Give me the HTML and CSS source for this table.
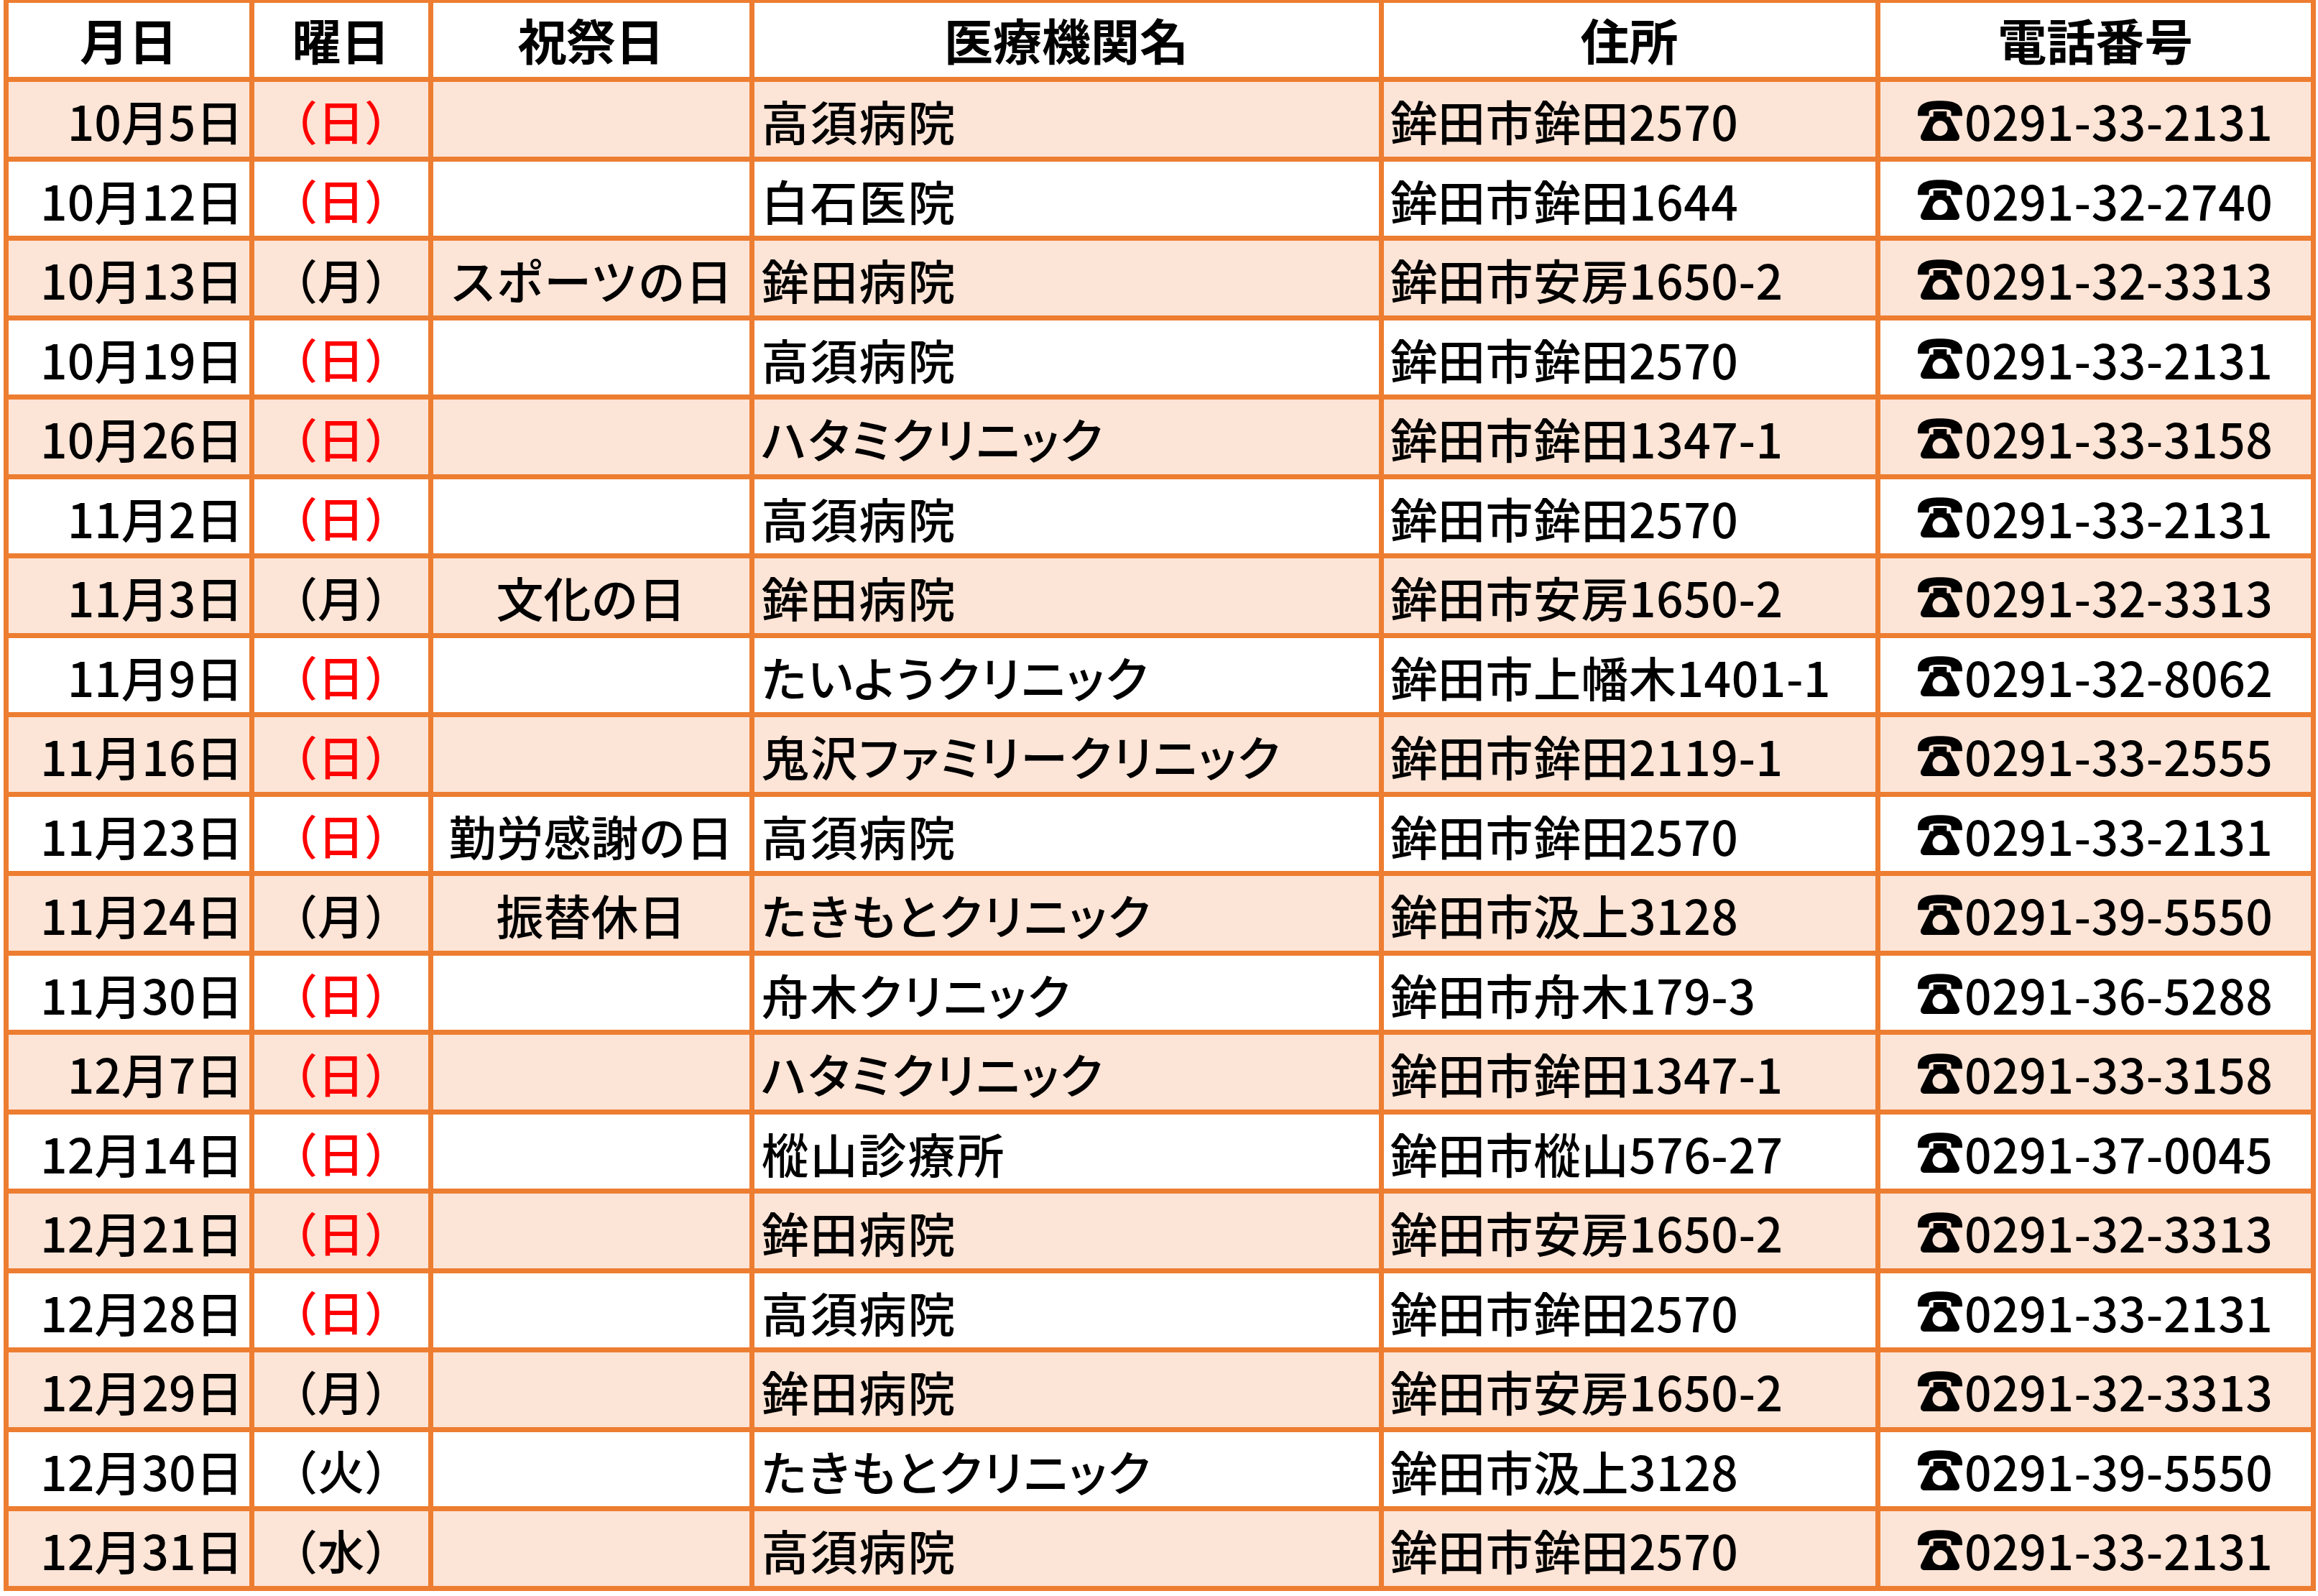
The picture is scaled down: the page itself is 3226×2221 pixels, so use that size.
FILE: index.html
```html
<!DOCTYPE html>
<html lang="ja">
<head>
<meta charset="utf-8">
<title>休日当番医</title>
<link rel="stylesheet" href="styles.css">
</head>
<body>
<svg class="defs" width="0" height="0" aria-hidden="true">
  <symbol id="tel" viewBox="0 0 100 92">
    <path d="M0,32 C0,10 16,2 50,2 C84,2 100,10 100,32 L100,36 L75,36 L75,28 C75,23 69,21 50,21 C31,21 25,23 25,28 L25,36 L0,36 Z"/>
    <path fill-rule="evenodd" d="M35,26 L65,26 L65,38 L72,38 L93,80 C95,88 91,92 84,92 L16,92 C9,92 5,88 7,80 L28,38 L35,38 Z M50,47 A17,17 0 1,0 50.01,47 Z"/>
  </symbol>
</svg>
<div class="sched" role="table">
  <div class="row head" role="row">
    <div class="c">月日</div><div class="c">曜日</div><div class="c">祝祭日</div><div class="c">医療機関名</div><div class="c">住所</div><div class="c">電話番号</div>
  </div>
  <div class="row alt" role="row">
    <div class="c date">10月5日</div><div class="c dow sun">（日）</div><div class="c hol"></div><div class="c name">高須病院</div><div class="c addr">鉾田市鉾田2570</div><div class="c tel"><svg class="ico"><use href="#tel"/></svg>0291-33-2131</div>
  </div>
  <div class="row" role="row">
    <div class="c date">10月12日</div><div class="c dow sun">（日）</div><div class="c hol"></div><div class="c name">白石医院</div><div class="c addr">鉾田市鉾田1644</div><div class="c tel"><svg class="ico"><use href="#tel"/></svg>0291-32-2740</div>
  </div>
  <div class="row alt" role="row">
    <div class="c date">10月13日</div><div class="c dow">（月）</div><div class="c hol">スポーツの日</div><div class="c name">鉾田病院</div><div class="c addr">鉾田市安房1650-2</div><div class="c tel"><svg class="ico"><use href="#tel"/></svg>0291-32-3313</div>
  </div>
  <div class="row" role="row">
    <div class="c date">10月19日</div><div class="c dow sun">（日）</div><div class="c hol"></div><div class="c name">高須病院</div><div class="c addr">鉾田市鉾田2570</div><div class="c tel"><svg class="ico"><use href="#tel"/></svg>0291-33-2131</div>
  </div>
  <div class="row alt" role="row">
    <div class="c date">10月26日</div><div class="c dow sun">（日）</div><div class="c hol"></div><div class="c name">ハタミクリニック</div><div class="c addr">鉾田市鉾田1347-1</div><div class="c tel"><svg class="ico"><use href="#tel"/></svg>0291-33-3158</div>
  </div>
  <div class="row" role="row">
    <div class="c date">11月2日</div><div class="c dow sun">（日）</div><div class="c hol"></div><div class="c name">高須病院</div><div class="c addr">鉾田市鉾田2570</div><div class="c tel"><svg class="ico"><use href="#tel"/></svg>0291-33-2131</div>
  </div>
  <div class="row alt" role="row">
    <div class="c date">11月3日</div><div class="c dow">（月）</div><div class="c hol">文化の日</div><div class="c name">鉾田病院</div><div class="c addr">鉾田市安房1650-2</div><div class="c tel"><svg class="ico"><use href="#tel"/></svg>0291-32-3313</div>
  </div>
  <div class="row" role="row">
    <div class="c date">11月9日</div><div class="c dow sun">（日）</div><div class="c hol"></div><div class="c name">たいようクリニック</div><div class="c addr">鉾田市上幡木1401-1</div><div class="c tel"><svg class="ico"><use href="#tel"/></svg>0291-32-8062</div>
  </div>
  <div class="row alt" role="row">
    <div class="c date">11月16日</div><div class="c dow sun">（日）</div><div class="c hol"></div><div class="c name">鬼沢ファミリークリニック</div><div class="c addr">鉾田市鉾田2119-1</div><div class="c tel"><svg class="ico"><use href="#tel"/></svg>0291-33-2555</div>
  </div>
  <div class="row" role="row">
    <div class="c date">11月23日</div><div class="c dow sun">（日）</div><div class="c hol">勤労感謝の日</div><div class="c name">高須病院</div><div class="c addr">鉾田市鉾田2570</div><div class="c tel"><svg class="ico"><use href="#tel"/></svg>0291-33-2131</div>
  </div>
  <div class="row alt" role="row">
    <div class="c date">11月24日</div><div class="c dow">（月）</div><div class="c hol">振替休日</div><div class="c name">たきもとクリニック</div><div class="c addr">鉾田市汲上3128</div><div class="c tel"><svg class="ico"><use href="#tel"/></svg>0291-39-5550</div>
  </div>
  <div class="row" role="row">
    <div class="c date">11月30日</div><div class="c dow sun">（日）</div><div class="c hol"></div><div class="c name">舟木クリニック</div><div class="c addr">鉾田市舟木179-3</div><div class="c tel"><svg class="ico"><use href="#tel"/></svg>0291-36-5288</div>
  </div>
  <div class="row alt" role="row">
    <div class="c date">12月7日</div><div class="c dow sun">（日）</div><div class="c hol"></div><div class="c name">ハタミクリニック</div><div class="c addr">鉾田市鉾田1347-1</div><div class="c tel"><svg class="ico"><use href="#tel"/></svg>0291-33-3158</div>
  </div>
  <div class="row" role="row">
    <div class="c date">12月14日</div><div class="c dow sun">（日）</div><div class="c hol"></div><div class="c name">樅山診療所</div><div class="c addr">鉾田市樅山576-27</div><div class="c tel"><svg class="ico"><use href="#tel"/></svg>0291-37-0045</div>
  </div>
  <div class="row alt" role="row">
    <div class="c date">12月21日</div><div class="c dow sun">（日）</div><div class="c hol"></div><div class="c name">鉾田病院</div><div class="c addr">鉾田市安房1650-2</div><div class="c tel"><svg class="ico"><use href="#tel"/></svg>0291-32-3313</div>
  </div>
  <div class="row" role="row">
    <div class="c date">12月28日</div><div class="c dow sun">（日）</div><div class="c hol"></div><div class="c name">高須病院</div><div class="c addr">鉾田市鉾田2570</div><div class="c tel"><svg class="ico"><use href="#tel"/></svg>0291-33-2131</div>
  </div>
  <div class="row alt" role="row">
    <div class="c date">12月29日</div><div class="c dow">（月）</div><div class="c hol"></div><div class="c name">鉾田病院</div><div class="c addr">鉾田市安房1650-2</div><div class="c tel"><svg class="ico"><use href="#tel"/></svg>0291-32-3313</div>
  </div>
  <div class="row" role="row">
    <div class="c date">12月30日</div><div class="c dow">（火）</div><div class="c hol"></div><div class="c name">たきもとクリニック</div><div class="c addr">鉾田市汲上3128</div><div class="c tel"><svg class="ico"><use href="#tel"/></svg>0291-39-5550</div>
  </div>
  <div class="row alt" role="row">
    <div class="c date">12月31日</div><div class="c dow">（水）</div><div class="c hol"></div><div class="c name">高須病院</div><div class="c addr">鉾田市鉾田2570</div><div class="c tel"><svg class="ico"><use href="#tel"/></svg>0291-33-2131</div>
  </div>
</div>
</body>
</html>
```

FILE: styles.css
```css
html, body {
  margin: 0;
  padding: 0;
  background: #ffffff;
}

body {
  font-family: "Noto Sans CJK JP", "Noto Sans", sans-serif;
  color: #000;
  overflow: hidden;
}

.defs {
  position: absolute;
  width: 0;
  height: 0;
}

.sched {
  display: grid;
  grid-template-columns: 335px 242px 440px 869px 684px 599.5px;
  grid-auto-rows: 103.5px;
  gap: 7px;
  padding: 7px;
  width: max-content;
  margin: -3.5px 0 0 4.5px;
  background: #ED7D31;
}

.row {
  display: contents;
}

.c {
  display: flex;
  align-items: center;
  background: #ffffff;
  font-size: 66px;
  font-weight: 500;
  line-height: 1;
  white-space: nowrap;
  padding-top: 3px;
  box-sizing: border-box;
}

.row.alt > .c {
  background: #FCE4D6;
}

.head > .c {
  justify-content: center;
  font-size: 68px;
  font-weight: 700;
  padding-top: 0;
}

.date {
  justify-content: flex-end;
  font-size: 66px;
  padding-right: 8px;
}

.dow {
  justify-content: center;
  font-size: 65px;
}

.dow.sun {
  color: #FF0000;
}

.hol {
  justify-content: center;
}

.name {
  justify-content: flex-start;
  padding-left: 10px;
  font-size: 66px;
  font-feature-settings: "palt";
  letter-spacing: 2px;
}

.addr {
  justify-content: flex-start;
  padding-left: 9px;
  letter-spacing: 0.5px;
}

.tel {
  justify-content: center;
  letter-spacing: 0.5px;
}

.ico {
  width: 62px;
  height: 57px;
  margin-right: 3px;
  fill: #000;
  flex: none;
}
```
